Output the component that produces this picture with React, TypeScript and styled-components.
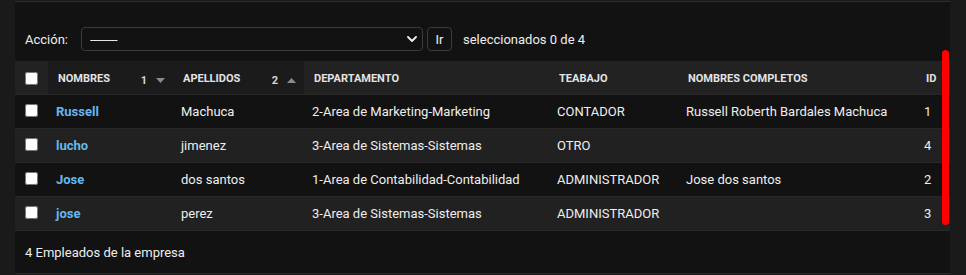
import { createGlobalStyle } from 'styled-components';
import styled from 'styled-components';

type TEmpleado = {
  id: number;
  nombres: string;
  apellidos: string;
  departamento: string;
  trabajo: string;
  completo: string;
};

const empleados: TEmpleado[] = [
  { id: 1, nombres: 'Russell', apellidos: 'Machuca', departamento: '2-Area de Marketing-Marketing', trabajo: 'CONTADOR', completo: 'Russell Roberth Bardales Machuca' },
  { id: 4, nombres: 'lucho', apellidos: 'jimenez', departamento: '3-Area de Sistemas-Sistemas', trabajo: 'OTRO', completo: '' },
  { id: 2, nombres: 'Jose', apellidos: 'dos santos', departamento: '1-Area de Contabilidad-Contabilidad', trabajo: 'ADMINISTRADOR', completo: 'Jose dos santos' },
  { id: 3, nombres: 'jose', apellidos: 'perez', departamento: '3-Area de Sistemas-Sistemas', trabajo: 'ADMINISTRADOR', completo: '' }
];

const COLUMNS = '33px 125px 131px 245px 129px 238px 34px';

const GlobalStyle = createGlobalStyle`
  * {
    box-sizing: border-box;
  }

  body {
    margin: 0;
    background: #1a1a1a;
    font-family: Roboto, 'Liberation Sans', sans-serif;
    color: #eeeeee;
  }
`;

const SortArrow = ({ dir }: { dir: 'up' | 'down' }) => (
  <svg width="9" height="5" viewBox="0 0 9 5">
    {dir === 'down' ? <polygon points="0,0 9,0 4.5,5" fill="#8a8a8a" /> : <polygon points="0,5 9,5 4.5,0" fill="#8a8a8a" />}
  </svg>
);

export default function App() {
  return (
    <>
      <GlobalStyle />
      <Page>
        <Panel>
          <TopEdge />
          <Actions>
            <span>Acción:</span>
            <SelectWrap>
              <Select defaultValue="">
                <option value="">---------</option>
                <option value="delete">Eliminar empleados seleccionados</option>
              </Select>
              <Chevron width="10" height="6" viewBox="0 0 10 6">
                <path d="M1 1 L5 5 L9 1" fill="none" stroke="#f0f0f0" strokeWidth="1.8" strokeLinecap="round" strokeLinejoin="round" />
              </Chevron>
            </SelectWrap>
            <GoButton type="button">Ir</GoButton>
            <Counter>seleccionados 0 de 4</Counter>
          </Actions>

          <Grid>
            <HeadRow>
              <HeadCell>
                <Check type="checkbox" />
              </HeadCell>
              <HeadCell $sorted>
                NOMBRES
                <SortOptions>
                  <span>1</span>
                  <SortArrow dir="down" />
                </SortOptions>
              </HeadCell>
              <HeadCell $sorted>
                APELLIDOS
                <SortOptions>
                  <span>2</span>
                  <SortArrow dir="up" />
                </SortOptions>
              </HeadCell>
              <HeadCell>DEPARTAMENTO</HeadCell>
              <HeadCell>TEABAJO</HeadCell>
              <HeadCell>NOMBRES COMPLETOS</HeadCell>
              <HeadCell>ID</HeadCell>
            </HeadRow>

            {empleados.map((e, i) => (
              <Row key={e.id} $alt={i % 2 === 1}>
                <CheckCell>
                  <Check type="checkbox" />
                </CheckCell>
                <Cell>
                  <NameLink href="#">{e.nombres}</NameLink>
                </Cell>
                <Cell>{e.apellidos}</Cell>
                <Cell>{e.departamento}</Cell>
                <Cell>{e.trabajo}</Cell>
                <Cell>{e.completo}</Cell>
                <Cell>{e.id}</Cell>
              </Row>
            ))}
          </Grid>

          <Footer>4 Empleados de la empresa</Footer>
          <ScrollThumb />
        </Panel>
      </Page>
    </>
  );
}

const Page = styled.div`
  padding: 0 16px 0 15px;
  height: 275px;
`;

const Panel = styled.div`
  position: relative;
  background: #121212;
  font-size: 13px;
`;

const TopEdge = styled.div`
  height: 2px;
  background: #1b1b1b;
  border-bottom: 1px solid #2e2e2e;
`;

const Actions = styled.div`
  display: flex;
  align-items: center;
  height: 24px;
  margin: 25px 0 10px;
  padding: 0 10px;
  color: #eeeeee;
`;

const SelectWrap = styled.span`
  position: relative;
  margin-left: 13px;
  display: inline-flex;
`;

const Select = styled.select`
  appearance: none;
  width: 342px;
  height: 24px;
  padding: 0 8px;
  background: #121212;
  color: #eeeeee;
  border: 1px solid #3b3b3b;
  border-radius: 4px;
  font: 13px Roboto, 'Liberation Sans', sans-serif;
  letter-spacing: -0.6px;
  outline: none;
`;

const Chevron = styled.svg`
  position: absolute;
  right: 6px;
  top: 9px;
  pointer-events: none;
`;

const GoButton = styled.button`
  margin-left: 4px;
  width: 25px;
  height: 24px;
  padding: 0;
  background: #121212;
  color: #f0f0f0;
  border: 1px solid #3b3b3b;
  border-radius: 4px;
  font: 13px Roboto, 'Liberation Sans', sans-serif;
`;

const Counter = styled.span`
  margin-left: 11px;
`;

const Grid = styled.div`
  display: flex;
  flex-direction: column;
`;

const HeadRow = styled.div`
  display: grid;
  grid-template-columns: ${COLUMNS};
  height: 34px;
  border-bottom: 1px solid #282828;
`;

const HeadCell = styled.div<{ $sorted?: boolean }>`
  display: flex;
  align-items: center;
  padding: 1px 8px 0 10px;
  background: ${({ $sorted }) => ($sorted ? '#1b1b1b' : '#222222')};
  color: #e4e4e4;
  font-size: 11px;
  font-weight: 700;
  white-space: nowrap;
`;

const SortOptions = styled.span`
  margin-left: auto;
  margin-top: 4px;
  display: flex;
  align-items: center;
  gap: 9px;
  font-size: 11px;
  font-weight: 700;
  color: #d6d6d6;
`;

const Row = styled.div<{ $alt: boolean }>`
  display: grid;
  grid-template-columns: ${COLUMNS};
  height: 34px;
  background: ${({ $alt }) => ($alt ? '#212121' : '#121212')};
  border-bottom: 1px solid #282828;
`;

const Cell = styled.div`
  display: flex;
  align-items: center;
  padding: 0 8px;
  white-space: nowrap;
  color: #eeeeee;
`;

const CheckCell = styled(Cell)`
  padding: 0 0 2px 10px;
`;

const Check = styled.input`
  margin: 0;
  width: 13px;
  height: 13px;
`;

const NameLink = styled.a`
  color: #66b7ec;
  font-weight: 700;
  text-decoration: none;
`;

const Footer = styled.div`
  display: flex;
  align-items: center;
  height: 43px;
  padding: 0 10px;
  border-bottom: 1px solid #2a2a2a;
  color: #eeeeee;
`;

const ScrollThumb = styled.div`
  position: absolute;
  right: 1px;
  top: 50px;
  width: 7px;
  height: 175px;
  border-radius: 4px;
  background: #ff0000;
`;
